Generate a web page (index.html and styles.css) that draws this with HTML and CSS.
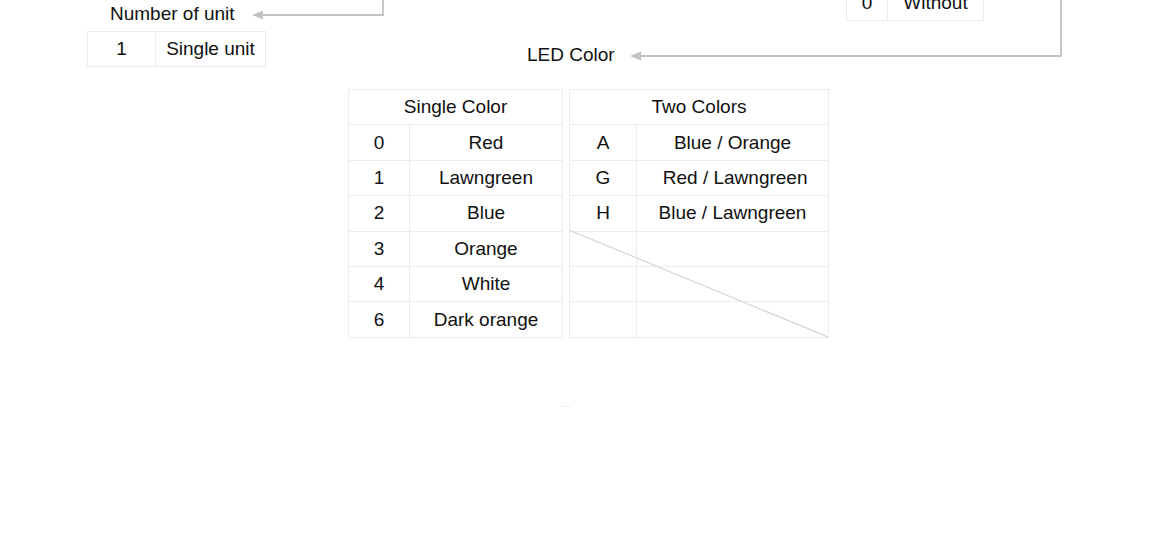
FILE: index.html
```html
<!DOCTYPE html>
<html>
<head>
<meta charset="utf-8">
<link rel="stylesheet" href="styles.css">
</head>
<body>
<div class="canvas">
  <svg class="wires" width="1150" height="540" viewBox="0 0 1150 540">
    <polyline points="383,0 383,15 262,15" class="wire"/>
    <polygon points="252,15 263,10.5 263,19.5" class="head"/>
    <polyline points="1061,0 1061,56 640,56" class="wire"/>
    <polygon points="630,56 641,51.5 641,60.5" class="head"/>
  </svg>

  <div class="node node-unit">
    <div class="label">Number of unit</div>
    <table class="tbl tbl-unit">
      <tr><td class="c1">1</td><td class="c2">Single unit</td></tr>
    </table>
  </div>

  <div class="node node-without">
    <table class="tbl tbl-without">
      <tr><td class="c1">0</td><td class="c2">Without</td></tr>
    </table>
  </div>

  <div class="node node-led">LED Color</div>

  <div class="node node-colors">
    <table class="tbl tbl-single">
      <tr><th colspan="2">Single Color</th></tr>
      <tr><td class="c1">0</td><td class="c2">Red</td></tr>
      <tr><td class="c1">1</td><td class="c2">Lawngreen</td></tr>
      <tr><td class="c1">2</td><td class="c2">Blue</td></tr>
      <tr><td class="c1">3</td><td class="c2">Orange</td></tr>
      <tr><td class="c1">4</td><td class="c2">White</td></tr>
      <tr><td class="c1">6</td><td class="c2">Dark orange</td></tr>
    </table>
    <div class="two-wrap">
      <table class="tbl tbl-two">
        <tr><th colspan="2">Two Colors</th></tr>
        <tr><td class="c1">A</td><td class="c2">Blue / Orange</td></tr>
        <tr><td class="c1">G</td><td class="c2">&nbsp;Red / Lawngreen</td></tr>
        <tr><td class="c1">H</td><td class="c2">Blue / Lawngreen</td></tr>
        <tr><td class="c1"></td><td class="c2"></td></tr>
        <tr><td class="c1"></td><td class="c2"></td></tr>
        <tr><td class="c1"></td><td class="c2"></td></tr>
      </table>
      <svg class="slash" width="259" height="107" viewBox="0 0 259 107" preserveAspectRatio="none">
        <line x1="0" y1="0" x2="259" y2="107"/>
      </svg>
    </div>
  </div>

  <div class="node node-mark"></div>
</div>
</body>
</html>
```

FILE: styles.css
```css
html, body {
  margin: 0;
  padding: 0;
  background: #ffffff;
}

.canvas {
  position: relative;
  width: 1150px;
  height: 540px;
  overflow: hidden;
  font-family: "Liberation Sans", Arial, sans-serif;
  font-size: 19px;
  color: #111111;
}

.wires {
  position: absolute;
  left: 0;
  top: 0;
}

.wire {
  fill: none;
  stroke: #c2c2c2;
  stroke-width: 1.8;
}

.head {
  fill: #c2c2c2;
}

.node {
  position: absolute;
}

.tbl {
  border-collapse: collapse;
  table-layout: fixed;
}

.tbl td,
.tbl th {
  border: 1px solid #ececec;
  padding: 0;
  text-align: center;
  font-weight: normal;
  white-space: nowrap;
  height: 34.4px;
}

.node-unit {
  left: 87px;
  top: 1px;
  display: flex;
  flex-direction: column;
}

.node-unit .label {
  height: 30px;
  line-height: 26px;
  padding-left: 23px;
}

.tbl-unit .c1 { width: 67px; }
.tbl-unit .c2 { width: 109px; }

.node-without {
  left: 846px;
  top: -15px;
}

.tbl-without .c1 { width: 40px; }
.tbl-without .c2 { width: 95px; }

.node-led {
  left: 527px;
  top: 42px;
  line-height: 25px;
}

.node-colors {
  left: 348px;
  top: 89px;
  display: flex;
  gap: 6px;
  align-items: flex-start;
}

.tbl-single .c1 { width: 60px; }
.tbl-single .c2 { width: 152px; }

.two-wrap {
  position: relative;
}

.tbl-two .c1 { width: 66px; }
.tbl-two .c2 { width: 191px; }

.slash {
  position: absolute;
  left: 0;
  top: 141px;
}

.slash line {
  stroke: #d6d6d6;
  stroke-width: 1.2;
}

.node-mark {
  left: 561px;
  top: 406px;
  width: 10px;
  height: 1px;
  background: #f0f0f0;
}
```
